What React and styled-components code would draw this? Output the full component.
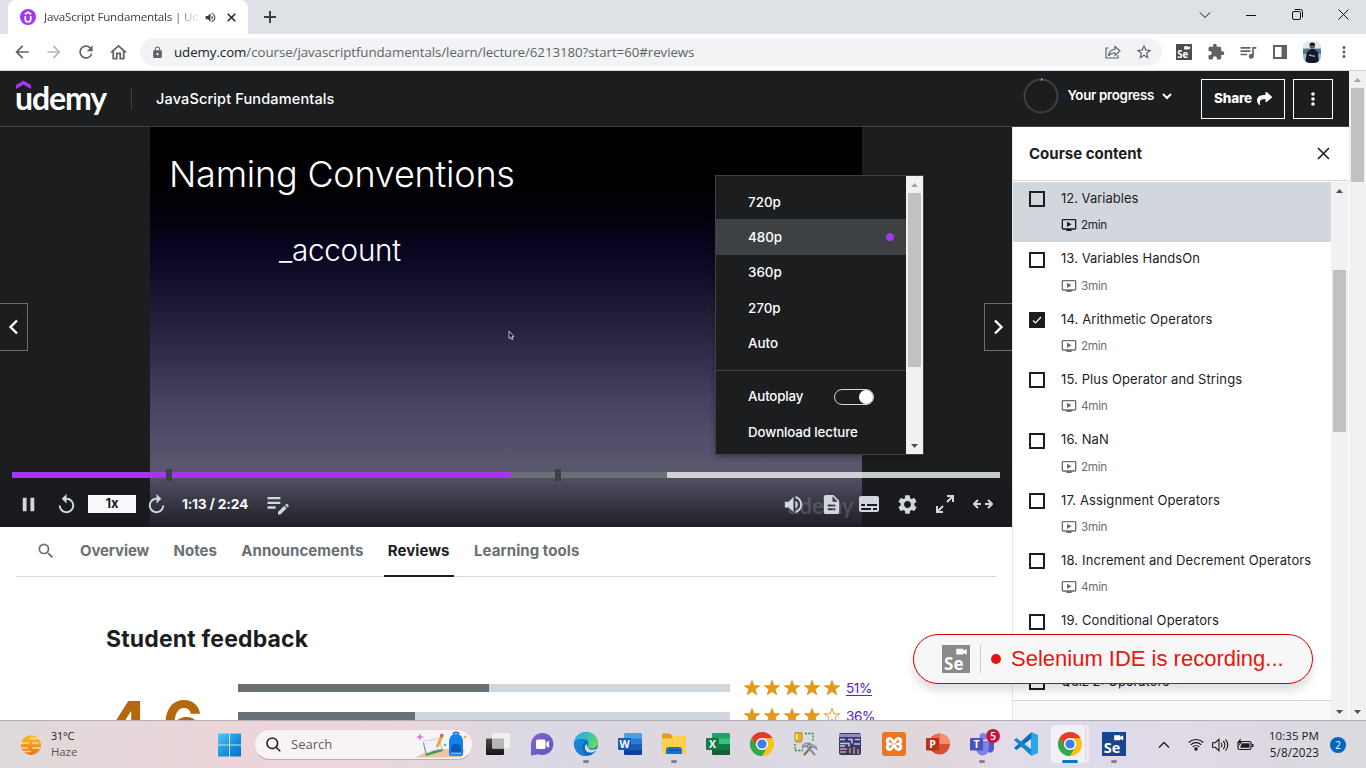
import React from "react";
import styled, { createGlobalStyle } from "styled-components";
import {
  MdArrowBack, MdArrowForward, MdRefresh, MdOutlineHome, MdLock, MdStarBorder, MdExtension, MdQueueMusic,
  MdMoreVert, MdVolumeUp, MdPause, MdReplay, MdEditNote, MdDescription, MdSubtitles, MdSettings, MdSearch,
  MdOutlineOndemandVideo,
} from "react-icons/md";
import { FaShare } from "react-icons/fa";

const Global = createGlobalStyle`
  * { box-sizing: border-box; }
  body { margin: 0; background: #fff; overflow: hidden; }
  svg { display: block; flex: none; }
`;
const UDEMY = `Inter, "Liberation Sans", sans-serif`;
const SEGOE = `"Open Sans", "Noto Sans", sans-serif`;

const Screen = styled.div`
  width: 1366px; height: 768px; display: flex; flex-direction: column; overflow: hidden;
  font-family: ${UDEMY}; color: #1c1d1f; position: relative;
`;
const Text = styled.span`
  white-space: nowrap; letter-spacing: ${(p) => p.$ls || 0}px; font-size: ${(p) => p.$size || 14}px;
  font-weight: ${(p) => p.$w || 400}; color: ${(p) => p.$c || "inherit"}; line-height: 1.2;
`;

/* browser chrome */
const TabStrip = styled.div`height: 34px; background: #dee1e6; display: flex; padding-left: 8px; flex: none;`;
const Tab = styled.div`
  width: 240px; height: 34px; background: #fff; border-radius: 8px 8px 0 0; display: flex; align-items: center;
  padding: 0 10px 0 12px; font-family: ${SEGOE};
`;
const TabTitle = styled.div`
  width: 154px; margin-left: 8px; overflow: hidden; white-space: nowrap; font-size: 11.6px; color: #3c4043;
  letter-spacing: -0.2px; line-height: 16px;
  mask-image: linear-gradient(90deg, #000 130px, transparent 156px);
`;
const TabIcon = styled.div`margin-left: ${(p) => p.$ml || 0}px;`;
const NewTab = styled.div`display: flex; align-items: center; padding-left: 16px; flex: 1;`;
const WindowButtons = styled.div`display: flex; width: 184px; height: 29px; align-items: center;`;
const WindowButton = styled.div`width: 46px; display: flex; justify-content: center;`;
const Toolbar = styled.div`
  height: 37px; background: #fff; border-bottom: 1px solid #d5d7da; display: flex; align-items: center; flex: none;
  padding-left: 12px; color: #5f6368;
`;
const ToolButton = styled.div`width: ${(p) => p.$w || 32}px; display: flex; justify-content: center; opacity: ${(p) => p.$o || 1}; flex: none;`;
const BookmarkStar = styled.div`margin: 0 -1px 0 14px;`;
const Omnibox = styled.div`
  width: 1022px; height: 28px; border-radius: 14px; background: #f1f3f4; display: flex; align-items: center;
  padding: 0 10px 0 11px; font-family: ${SEGOE};
`;
const Url = styled.div`flex: 1; margin-left: 10px; font-size: 13.3px; color: #5f6368; letter-spacing: -0.06px; b { font-weight: 400; color: #202124; }`;
const Avatar = styled.div`width: 18px; height: 22px; border-radius: 7px; overflow: hidden;`;

/* page */
const Page = styled.div`height: 649px; flex: none; display: flex; overflow: hidden; background: #fff;`;
const Site = styled.div`width: 1349px; display: flex; flex-direction: column;`;
const Header = styled.header`
  height: 56px; background: #1c1d1f; border-bottom: 1px solid #3e4143; color: #fff; display: flex; align-items: center;
  padding: 0 16px; flex: none;
`;
const Logo = styled.div`width: 92px; height: 40px; position: relative;`;
const LogoHat = styled.svg`position: absolute; left: 0; top: 1px;`;
const LogoWord = styled.div`font: 700 32px/37px Lato, sans-serif; letter-spacing: -1.1px; color: #fff; margin-left: -1px;`;
const Rule = styled.div`width: 1px; height: 22px; background: #3e4143; margin: 0 24px 0 23px;`;
const Grow = styled.div`flex: 1;`;
const Progress = styled.div`display: flex; align-items: center; height: 36px; margin-top: -6px; gap: 8px;`;
const HeaderButton = styled.div`
  height: 40px; width: ${(p) => p.$w}px; border: 1px solid #fff; display: flex; align-items: center; justify-content: center;
  gap: 5px; margin-left: ${(p) => p.$ml}px;
`;
const Columns = styled.div`display: flex; height: 593px;`;
const Main = styled.main`width: 1012px; flex: none;`;

/* player */
const Player = styled.section`height: 400px; background: #1c1d1f; display: flex; justify-content: center; position: relative; color: #fff; overflow: hidden;`;
const Slide = styled.div`
  width: 712px; height: 400px;
  background: linear-gradient(#000 0, #010104 60px, #03020d 95px, #080520 120px, #0f0d28 148px, #1d1b35 180px, #312d4a 228px, #464260 275px, #55516c 320px, #5c586f 345px);
`;
const SlideTitle = styled.div`margin: 25px 0 0 19px; font-size: 36px; line-height: 44px; font-weight: 300; letter-spacing: -0.22px;`;
const SlideLine = styled.div`margin: 35px 0 0 129px; font-size: 29.6px; line-height: 38px; font-weight: 300; letter-spacing: -0.25px;`;
const Cursor = styled.svg`position: absolute; left: 508px; top: 203px;`;
const NavButton = styled.div`
  position: absolute; top: 176px; ${(p) => p.$side}: 0; width: 28px; height: 48px; background: #1c1d1f;
  border: 1px solid #6a6f73; border-${(p) => p.$side}: 0; display: flex; align-items: center; justify-content: center;
  padding-right: ${(p) => (p.$side === "right" ? 2 : 0)}px;
`;
const Watermark = styled.span`position: absolute; left: 787px; top: 366px; font: 700 22px/26px Lato, sans-serif; color: rgba(150,150,165,.32); letter-spacing: 0;`;
const Shade = styled.div`position: absolute; left: 0; right: 0; bottom: 0; height: 58px; background: linear-gradient(rgba(20,22,28,0), rgba(20,22,28,.35) 40%, rgba(24,26,31,.92));`;
const Seek = styled.div`position: absolute; left: 12px; width: 988px; top: 345px; height: 6px; display: flex;`;
const SeekPart = styled.div`width: ${(p) => p.$w}px; background: ${(p) => p.$c};`;
const Bookmark = styled.div`position: absolute; left: ${(p) => p.$x}px; top: -3px; width: 6px; height: 12px; background: #3e4143;`;
const Controls = styled.div`
  position: absolute; left: 0; right: 0; bottom: 0; height: 46px; display: flex; align-items: center; color: #d1d7dc;
  padding: 0 10px 0 9px;
`;
const Control = styled.div`width: ${(p) => p.$w || 38}px; height: 38px; display: flex; align-items: center; justify-content: center;`;
const Rate = styled.div`width: 48px; height: 18px; background: #f7f9fa; color: #1c1d1f; display: flex; align-items: center; justify-content: center; margin: 0 1px 0 3px;`;
const Mirror = styled.div`transform: scaleX(-1);`;

const Menu = styled.div`
  position: absolute; left: 715px; top: 48px; width: 209px; height: 280px; border: 1px solid #3e4143; background: #1c1d1f;
  display: flex; box-shadow: 0 2px 6px rgba(0,0,0,.3);
`;
const MenuList = styled.div`flex: 1; padding-top: 8px;`;
const MenuItem = styled.div`
  height: 35.4px; padding: 0 12px 0 32px; display: flex; align-items: center; justify-content: space-between;
  background: ${(p) => (p.$on ? "#3e4143" : "transparent")};
`;
const Dot = styled.i`width: 8px; height: 8px; border-radius: 50%; background: #a435f0;`;
const MenuRule = styled.div`height: 1px; background: #3e4143; margin: 9px 0 8.6px;`;
const Toggle = styled.div`width: 40px; height: 16px; border: 1px solid #d1d7dc; border-radius: 8px; display: flex; justify-content: flex-end; margin-right: 20px; i { width: 14px; height: 14px; border-radius: 50%; background: #fff; }`;

const Bar = styled.div`width: 17px; background: #f1f1f1; display: flex; flex-direction: column; align-items: center; flex: none;`;
const BarArrow = styled.div`height: 17px; flex: none; display: flex; align-items: center;`;
const Thumb = styled.div`width: 13px; background: #c1c1c1; margin-top: ${(p) => p.$top || 0}px; height: ${(p) => p.$h}px;`;

/* below player */
const TabBar = styled.nav`height: 50px; margin: 0 16px; border-bottom: 1px solid #d1d7dc; display: flex; color: #6a6f73; padding-left: 22px;`;
const TabItem = styled.div`
  height: 50px; display: flex; align-items: center; padding: 0 4px 2px; margin-left: ${(p) => p.$ml || 16.4}px;
  ${(p) => p.$on && "border-bottom: 2px solid #1c1d1f; color: #1c1d1f; padding-bottom: 0;"}
`;
const TabSearch = styled.div`width: 15px; height: 48px; display: flex; align-items: center; justify-content: center;`;
const Feedback = styled.section`padding: 46px 0 0 106px; height: 143px; overflow: hidden;`;
const FeedbackTitle = styled.h2`margin: 0; font-size: 23px; line-height: 32px; font-weight: 700; letter-spacing: 0.16px;`;
const Ratings = styled.div`display: flex; margin-top: 19px;`;
const Score = styled.div`width: 132px; margin-top: 18px; font-size: 63px; line-height: 64px; font-weight: 700; color: #b4690e; letter-spacing: -1.6px;`;
const MeterRow = styled.div`display: flex; height: 28px; align-items: center;`;
const Meter = styled.div`width: 492px; height: 8px; background: #d1d7dc; margin-right: 14px;`;
const MeterFill = styled.div`height: 8px; background: #6a6f73;`;
const Stars = styled.div`display: flex; gap: 4px; margin-right: 6px;`;
const Percent = styled(Text)`color: #5624d0; text-decoration: underline; text-underline-offset: 2px; text-decoration-thickness: 1px; font-size: 13.6px; letter-spacing: -0.4px;`;

/* sidebar */
const Sidebar = styled.aside`width: 337px; border-left: 1px solid #e4e8eb; display: flex; flex-direction: column; background: #fff;`;
const SideHead = styled.div`height: 54px; border-bottom: 1px solid #d1d7dc; display: flex; align-items: center; justify-content: space-between; padding: 0 19px 0 16px; flex: none;`;
const SideBody = styled.div`display: flex; height: 538px; margin-top: 1px;`;
const Lectures = styled.div`width: 318px; background: #f7f9fa; overflow: hidden;`;
const LectureGroup = styled.div`background: #fff; height: 519px; overflow: hidden; border-bottom: 1px solid #d1d7dc;`;
const Lecture = styled.div`height: 60.33px; background: ${(p) => (p.$on ? "#d1d7dc" : "#fff")}; display: flex; padding: 9.33px 16px 0;`;
const Check = styled.div`
  width: 16px; height: 16px; border: 2px solid #1c1d1f; background: ${(p) => (p.$on ? "#1c1d1f" : "transparent")};
  margin-right: 16px; flex: none; display: flex; align-items: center; justify-content: center;
`;
const LectureTitle = styled.div`height: 16px; margin-top: -0.4px; display: flex; align-items: center;`;
const LectureMeta = styled.div`height: 16px; margin-top: 10.4px; display: flex; align-items: center; gap: 4px; color: ${(p) => (p.$on ? "#1c1d1f" : "#6a6f73")};`;

/* recorder badge */
const Recorder = styled.div`
  position: absolute; left: 913px; top: 634px; width: 400px; height: 50px; border: 1px solid #d30000; border-radius: 25px;
  background: #f7f7f7; box-shadow: 0 7px 10px rgba(0,0,0,.13); display: flex; align-items: center; padding-left: 28px;
  font-family: "Liberation Sans", Arial, sans-serif;
`;
const RecorderRule = styled.div`width: 1px; height: 28px; background: #ccc; margin: 0 10px;`;
const RecorderDot = styled.i`width: 10px; height: 10px; border-radius: 50%; background: #e8140f; margin-right: 10px;`;

/* taskbar */
const Taskbar = styled.footer`
  height: 48px; flex: none; border-top: 1px solid #b3afb2; display: flex; align-items: center; font-family: ${SEGOE};
  background: linear-gradient(90deg, #dddadb 0, #e4d8da 90px, #ead5d9 200px, #edd5dc 340px, #e6d7dc 440px, #dad9e4 530px, #ddd7df 700px, #dcdae3 850px, #e1d5da 930px, #e2dbe8 1010px, #dddaea 1100px, #e2dae6 1180px, #dcd8e2 1280px, #dadbdf 1366px);
`;
const Weather = styled.div`width: 217px; display: flex; align-items: center; padding-left: 19px; gap: 8px;`;
const Stack = styled.div`display: flex; flex-direction: column; align-items: ${(p) => p.$align || "flex-start"}; margin-top: -1px; ${Text} { line-height: 16px; }`;
const SearchPill = styled.div`
  width: 219px; height: 31px; margin: 0 3px 0 13px; border-radius: 16px; background: #f8f3f5; border: 1px solid #e0d3d7; border-bottom-color: #b9aeb2;
  display: flex; align-items: center; padding: 0 3px 0 11px; gap: 10px;
`;
const AppSlot = styled.div`
  width: 44px; height: 47px; display: flex; flex-direction: column; align-items: center; padding-top: 11px; position: relative;
`;
const ActivePlate = styled.div`position: absolute; left: 3px; top: 4px; width: 34px; height: 38px; border-radius: 4px; background: #f3eff6; box-shadow: 1px 0 0 #dcd7e4, 4px 0 0 #eee9f3;`;
const IconBox = styled.div`position: relative; width: 24px; height: 24px;`;
const Running = styled.i`width: ${(p) => (p.$active ? 16 : 6)}px; height: 3px; border-radius: 2px; background: ${(p) => (p.$active ? "#0078d4" : "#838087")}; margin-top: 4px; position: relative;`;
const Tray = styled.div`flex: 1; display: flex; align-items: center; justify-content: flex-end; padding-right: 20px; color: #1b1b1b;`;
const TrayIcon = styled.div`margin-right: ${(p) => p.$mr}px;`;
const Count = styled.div`width: 16px; height: 16px; border-radius: 50%; background: #0067c0; color: #fff; font-size: 10px; line-height: 16px; text-align: center; margin-left: 11px;`;
const TeamsCount = styled.div`position: absolute; left: 16px; top: -3px; width: 14px; height: 14px; border-radius: 50%; background: #c4143c; color: #fff; font: 600 10px/14px ${SEGOE}; text-align: center;`;

const Line = ({ d, s = 16, vb = "0 0 16 16", w = 1.5, c = "currentColor" }) => (
  <svg width={s} height={s} viewBox={vb} fill="none" stroke={c} strokeWidth={w}><path d={d} /></svg>
);
const Tri = ({ up, c = "#505050" }) => (
  <svg width="7" height="4" viewBox="0 0 7 4"><path d={up ? "M0 4 3.5 0 7 4z" : "M0 0 3.5 4 7 0z"} fill={c} /></svg>
);
const SeTile = ({ s, bg }) => (
  <svg width={s} height={s} viewBox="0 0 24 24">
    <rect width="24" height="24" fill={bg} />
    <path d="M12.2 3.2h6v1.6l3-1.400v4.800l-3-1.200v1.200h-6z" fill="#fff" />
    <text x="1.800" y="21" fontFamily="Open Sans, sans-serif" fontWeight="700" fontSize="14.500" fill="#fff">Se</text>
  </svg>
);
const UdemyBadge = () => (
  <svg width="16" height="16" viewBox="0 0 16 16"><circle cx="8" cy="8" r="8" fill="#a435f0" /><path d="M4.8 5.3 8 3.300l3.200 2M5.300 7v3.200a2.700 2.700 0 0 0 5.400 0V7" fill="none" stroke="#fff" strokeWidth="1.700" /></svg>
);
const Person = () => (
  <svg width="18" height="22" viewBox="0 0 18 22">
    <rect width="18" height="22" fill="#9db9c8" /><rect width="18" height="7" fill="#dfeaf0" /><path d="M0 8h18v5H0z" fill="#52788a" />
    <path d="M2 22 4 11l4-3h3l4 3 1 11z" fill="#111a2e" /><circle cx="9.300" cy="4.800" r="2.800" fill="#6b4f48" /><path d="M6.500 4.300a2.800 2.800 0 0 1 5.600 0z" fill="#14141c" /><path d="m6 14 6 1.400" stroke="#c59a86" strokeWidth="1.400" />
  </svg>
);
const Chrome = () => (
  <svg width="24" height="24" viewBox="0 0 24 24">
    <circle cx="12" cy="12" r="12" fill="#fbc116" />
    <path d="M1.600 6A12 12 0 0 1 22.400 6H12a6 6 0 0 0-5.200 9z" fill="#e33b2e" />
    <path d="M1.600 6A12 12 0 0 0 12 24l5.200-9A6 6 0 0 1 6.800 15z" fill="#2da94f" />
    <circle cx="12" cy="12" r="6" fill="#fff" /><circle cx="12" cy="12" r="4.600" fill="#3b7ded" />
  </svg>
);
const IconLetter = ({ children, y = 15.6 }) => (
  <text x="6.500" y={y} textAnchor="middle" fontFamily="Open Sans, sans-serif" fontWeight="700" fontSize="10.500" fill="#fff">{children}</text>
);
const Office = ({ letter, colors, tile }) => (
  <svg width="24" height="24" viewBox="0 0 24 24">
    <rect x="6" y="1" width="18" height="22" rx="1.400" fill={colors[0]} /><path d="M6 6.500h18V12H6z" fill={colors[1]} />
    <path d="M6 12h18v5.500H6z" fill={colors[2]} /><path d="M6 17.500h18v4a1.500 1.500 0 0 1-1.500 1.500h-15A1.500 1.500 0 0 1 6 21.500z" fill={colors[3]} />
    <rect y="6" width="13" height="12" rx="1" fill={tile} />
    <IconLetter>{letter}</IconLetter>
  </svg>
);
const icons = {
  taskview: <svg width="24" height="24" viewBox="0 0 24 24"><defs><linearGradient id="tv" x2="0" y2="1"><stop stopColor="#4a4a4a" /><stop offset="1" stopColor="#161616" /></linearGradient></defs><rect y="6.500" width="18" height="16.500" rx="1" fill="url(#tv)" /><rect x="6" y="1" width="18" height="15.500" rx="1.500" fill="#f1f0f1" /><path d="M6 6.500h12v10H7.500A1.500 1.500 0 0 1 6 15z" fill="#b5b5b5" /></svg>,
  chat: <svg width="24" height="24" viewBox="0 0 24 24"><defs><linearGradient id="ch" x2="1" y2="1"><stop stopColor="#8a63c5" /><stop offset="1" stopColor="#5458c4" /></linearGradient></defs><path d="M12.500 1a11 11 0 1 1-4 21.300L1 23.500V12A11.300 11.300 0 0 1 12.500 1z" fill="url(#ch)" /><rect x="6" y="7.500" width="9.500" height="9.500" rx="1.500" fill="#fff" /><path d="m16.300 10.500 2.800-2v7.500l-2.800-2z" fill="#fff" /></svg>,
  edge: <svg width="24" height="24" viewBox="0 0 24 24"><defs><linearGradient id="ed" x2="1" y2=".3"><stop stopColor="#2aa8e6" /><stop offset=".6" stopColor="#35c1c0" /><stop offset="1" stopColor="#62da5c" /></linearGradient></defs><circle cx="12" cy="12" r="12" fill="#0f6cbd" /><path d="M0 11C1 4 6 0 12 0c7 0 12 5 12 10.500 0 4-3 6-6.500 6-2.500 0-4-1-4-2 0-.8 1-1.300 1-3.200C14.500 8.500 11.500 7 8.500 7 4 7 1 9.500 0 11z" fill="url(#ed)" /><path d="M8.500 16C8 12.500 10 9.500 12.500 8.700 10 6.500 4 7 1 10.500-1 17 4 24 12 24c-2-1-3.200-4.500-3.500-8z" fill="#1683d8" /><path d="M13.300 11.500c-1.500 2.500 1 6 4.200 6.200 2.500 0 4.500-1 5.800-1.500C21.500 20 18 21 15 20.500c-4-.8-6-6-1.700-9z" fill="#dcd9e2" /></svg>,
  word: <Office letter="W" colors={["#41a5ee", "#2b7cd3", "#185abd", "#103f91"]} tile="#185abd" />,
  folder: <svg width="24" height="24" viewBox="0 0 24 24"><path d="M0 3a1.500 1.500 0 0 1 1.500-1.500H8L10.500 4H24v5H0z" fill="#e09f14" /><path d="M0 6.500h9L11 4h11.500A1.500 1.500 0 0 1 24 5.500V20a2 2 0 0 1-2 2H2a2 2 0 0 1-2-2z" fill="#ffd04c" /><path d="M4 22v-4a3 3 0 0 1 3-3h10a3 3 0 0 1 3 3v4z" fill="#1277cc" /><path d="M7 18.300h10" stroke="#0b4e91" strokeWidth="1.300" /></svg>,
  excel: <Office letter="X" colors={["#21a366", "#33c481", "#107c41", "#185c37"]} tile="#107c41" />,
  chrome: <Chrome />,
  tools: <svg width="24" height="24" viewBox="0 0 24 24"><rect x="1" y="0" width="7" height="10" rx="2" fill="#e4b51d" stroke="#8a7015" strokeWidth=".7" /><path d="M2.500 2v6" stroke="#fff6a8" strokeWidth="1.500" /><path d="M11 1.500h8v8M1 12v6.500h8" fill="none" stroke="#2c8a2c" strokeWidth="1.300" strokeDasharray="2 1.300" /><path d="m10 23 8-9" stroke="#8c6a3f" strokeWidth="2" /><path d="m12 13 9 10" stroke="#7f8fa0" strokeWidth="2" /><path d="M8 14c2-3 6-4 8-2l-3 2-3 .5-1 2zM15 11l7 3.500 1 3-3-2-4-1z" fill="#aab8c6" stroke="#56677a" strokeWidth=".7" /></svg>,
  circuit: <svg width="24" height="24" viewBox="0 0 24 24"><rect x="1" y="1" width="22" height="22" rx="2" fill="#3b3970" /><path d="M1 3.500h22" stroke="#8f8dbd" strokeWidth="3" /><path d="M2 7.500h5M10 7.500h4v4M17 7.500h5M2 11.500h9v3M16 12h6M2 14h5" fill="none" stroke="#c4c3e4" strokeWidth="1.500" /><path d="M2 17h7M2 20h6M12 16v5M16 15v7M20 17v5" stroke="#dba55b" strokeWidth="1.300" /></svg>,
  xampp: <svg width="24" height="24" viewBox="0 0 24 24"><rect width="24" height="24" rx="3" fill="#ee7623" /><path d="M8 6.500c-3.500 0-3.500 4.500-.5 5.500-3 1-3 5.500.5 5.500 2.400 0 2-3.500 4-3.500s1.600 3.500 4 3.500c3.500 0 3.500-4.500.5-5.500 3-1 3-5.500-.5-5.500-2.400 0-2 3.500-4 3.500S10.400 6.500 8 6.500z" fill="none" stroke="#fff" strokeWidth="3" /></svg>,
  ppt: <svg width="24" height="24" viewBox="0 0 24 24"><circle cx="13.500" cy="12" r="10.500" fill="#d35230" /><path d="M13.500 1.500A10.500 10.500 0 0 1 24 12H13.500z" fill="#ff8f6b" /><path d="M13.500 1.500A10.500 10.500 0 0 0 3 12h10.500z" fill="#ed6c47" /><rect y="6" width="13" height="12.500" rx="1" fill="#b83218" /><IconLetter>P</IconLetter></svg>,
  teams: <svg width="24" height="24" viewBox="0 0 24 24"><circle cx="13" cy="4.500" r="3.500" fill="#7b83eb" /><path d="M16 9h8v8a4 4 0 0 1-6 3z" fill="#5059c9" /><path d="M6 9h13v8a6.500 6.500 0 0 1-13 0z" fill="#7b83eb" /><rect y="6" width="13" height="12.500" rx="1" fill="#4b53bc" /><IconLetter>T</IconLetter></svg>,
  code: <svg width="24" height="24" viewBox="0 0 24 24"><path d="M17.500 0 24 3v18l-6.500 3-.5-6V6z" fill="#29a8ee" /><path d="M17.500 0v6.500L2.500 18 0 16z" fill="#0a6fb8" /><path d="M17.500 24v-6.500L2.500 6 0 8z" fill="#1387cf" /></svg>,
  selenium: <SeTile s={24} bg="#17468f" />,
};
const apps = [
  ["taskview"], ["chat"], ["edge", 1], ["word"], ["folder", 1], ["excel"], ["chrome"], ["tools"], ["circuit"], ["xampp"],
  ["ppt"], ["teams", 1], ["code"], ["chrome", 2], ["selenium", 1],
];
const lectures = [
  ["12. Variables", "2min", 0], ["13. Variables HandsOn", "3min", 0.05], ["14. Arithmetic Operators", "2min", 0.12],
  ["15. Plus Operator and Strings", "4min", 0.11], ["16. NaN", "2min", 0.1], ["17. Assignment Operators", "3min", 0.13],
  ["18. Increment and Decrement Operators", "4min", 0.145], ["19. Conditional Operators", "3min", 0.13], ["Quiz 2: Operators", "", 0],
];

export default function App() {
  return (
    <Screen>
      <Global />
      <TabStrip>
        <Tab>
          <UdemyBadge />
          <TabTitle>JavaScript Fundamentals | Udemy</TabTitle>
          <TabIcon $ml={6}><MdVolumeUp size={13} color="#3c4043" /></TabIcon>
          <TabIcon $ml={10}><Line s={9} vb="0 0 9 9" d="m.7.7 7.600 7.600M8.300.7.7 8.300" c="#202124" /></TabIcon>
        </Tab>
        <NewTab><Line s={12} vb="0 0 12 12" d="M6 0v12M0 6h12" c="#3c4043" w={2} /></NewTab>
        <WindowButtons>
          <WindowButton><Line s={12} vb="0 0 12 12" d="m1 3.500 5 5 5-5" c="#111" w={1} /></WindowButton>
          <WindowButton><Line s={10} vb="0 0 10 10" d="M0 5.500h10" c="#111" w={1} /></WindowButton>
          <WindowButton><svg width="11" height="11" viewBox="0 0 11 11" fill="none" stroke="#111"><rect x=".5" y="2.500" width="8" height="8" rx="1.500" /><path d="M2.800.5h5.700a2 2 0 0 1 2 2v5.700" /></svg></WindowButton>
          <WindowButton><Line s={11} vb="0 0 11 11" d="m.5.5 10 10m0-10-10 10" c="#111" w={1} /></WindowButton>
        </WindowButtons>
      </TabStrip>
      <Toolbar>
        <ToolButton $w={20}><MdArrowBack size={20} /></ToolButton>
        <ToolButton $w={44} $o={0.45}><MdArrowForward size={20} /></ToolButton>
        <ToolButton $w={20}><MdRefresh size={20} /></ToolButton>
        <ToolButton $w={44}><MdOutlineHome size={21} /></ToolButton>
        <Omnibox>
          <MdLock size={13} />
          <Url><b>udemy.com</b>/course/javascriptfundamentals/learn/lecture/6213180?start=60#reviews</Url>
          <Line d="M3.500 4H1v10h12v-3M10 2.500 15 7l-5 4.500V9C7 8.800 5 9.700 3.500 12 4 8 6 5.600 10 5.200z" w={1.2} />
          <BookmarkStar><MdStarBorder size={18} /></BookmarkStar>
        </Omnibox>
        <ToolButton $w={44}><SeTile s={16} bg="#4d4d4d" /></ToolButton>
        <ToolButton $w={20}><MdExtension size={18} /></ToolButton>
        <ToolButton $w={44}><MdQueueMusic size={20} /></ToolButton>
        <ToolButton $w={20}><svg width="14" height="14" viewBox="0 0 14 14"><path d="M1 1h12v12H1z" fill="none" stroke="#5f6368" strokeWidth="2" /><path d="M8.500 1H13v12H8.500z" fill="#5f6368" /></svg></ToolButton>
        <ToolButton $w={44}><Avatar><Person /></Avatar></ToolButton>
        <ToolButton $w={20}><MdMoreVert size={18} /></ToolButton>
      </Toolbar>

      <Page>
        <Site>
          <Header>
            <Logo>
              <LogoHat width="15" height="9" viewBox="0 0 15 9"><path d="M0 5 7.500.5 15 5v4L7.500 4.800 0 9z" fill="#a435f0" /></LogoHat>
              <LogoWord>udemy</LogoWord>
            </Logo>
            <Rule />
            <Text $size={14.5} $w={500} $ls={0.14}>JavaScript Fundamentals</Text>
            <Grow />
            <Progress>
              <svg width="36" height="36" viewBox="0 0 36 36"><circle cx="18" cy="18" r="16.500" fill="none" stroke="#3e4143" strokeWidth="2" /><path d="M18 1.500h1.500" stroke="#c0a8f0" strokeWidth="2" /></svg>
              <Text $w={600} $size={13.3} $ls={-0.28}>Your progress</Text>
              <Line s={10} vb="0 0 10 10" d="m1 3 4 4 4-4" w={2} />
            </Progress>
            <HeaderButton $w={84} $ml={29}><Text $w={800} $size={13.5} $ls={-0.2}>Share</Text><FaShare size={15} /></HeaderButton>
            <HeaderButton $w={40} $ml={8}><svg width="4" height="14" viewBox="0 0 4 14" fill="#fff"><circle cx="2" cy="2" r="1.800" /><circle cx="2" cy="7" r="1.800" /><circle cx="2" cy="12" r="1.800" /></svg></HeaderButton>
          </Header>
          <Columns>
            <Main>
              <Player>
                <Slide>
                  <SlideTitle>Naming Conventions</SlideTitle>
                  <SlideLine>_account</SlideLine>
                </Slide>
                <Cursor width="7" height="11" viewBox="0 0 7 11"><path d="M1 1v7.500l1.700-1.500 1.100 2.800 1.200-.5-1-2.700h2z" fill="#111" stroke="#ccc" strokeWidth=".9" /></Cursor>
                <Shade />
                <Watermark>udemy</Watermark>
                <NavButton $side="left"><Line s={16} d="m11 1.500-6.500 6.500 6.500 6.500" w={2.4} /></NavButton>
                <NavButton $side="right"><Line s={16} d="m5 1.500 6.500 6.500-6.500 6.500" w={2.4} /></NavButton>
                <Seek>
                  <SeekPart $w={499} $c="#a435f0" /><SeekPart $w={156} $c="#6a6f73" /><SeekPart $w={333} $c="rgba(226,229,228,.86)" />
                  <Bookmark $x={154} /><Bookmark $x={543} />
                </Seek>
                <Controls>
                  <Control><MdPause size={23} /></Control>
                  <Control><MdReplay size={23} /></Control>
                  <Rate><Text $size={13} $w={700}>1x</Text></Rate>
                  <Control><Mirror><MdReplay size={23} /></Mirror></Control>
                  <Control $w={80}><Text $w={700} $size={13.8} $ls={-0.2} $c="#f7f9fa">1:13 / 2:24</Text></Control>
                  <Control $w={46}><MdEditNote size={28} /></Control>
                  <Grow />
                  <Control><MdVolumeUp size={23} /></Control>
                  <Control><MdDescription size={23} /></Control>
                  <Control><MdSubtitles size={24} /></Control>
                  <Control><MdSettings size={23} /></Control>
                  <Control><Line s={18} vb="0 0 18 18" d="M11 1h6v6M17 1l-6 6M7 17H1v-6M1 17l6-6" w={2} /></Control>
                  <Control><Line s={20} vb="0 0 20 20" d="M5 6 1 10l4 4M15 6l4 4-4 4M1 10h7M12 10h7" w={2} /></Control>
                </Controls>
                <Menu>
                  <MenuList>
                    {["720p", "480p", "360p", "270p", "Auto"].map((q) => (
                      <MenuItem key={q} $on={q === "480p"}><Text $size={13.4} $w={500}>{q}</Text>{q === "480p" && <Dot />}</MenuItem>
                    ))}
                    <MenuRule />
                    <MenuItem><Text $size={13.3} $w={500} $ls={-0.15}>Autoplay</Text><Toggle><i /></Toggle></MenuItem>
                    <MenuItem><Text $size={13.3} $w={500} $ls={-0.1}>Download lecture</Text></MenuItem>
                  </MenuList>
                  <Bar><BarArrow><Tri up c="#a3a3a3" /></BarArrow><Thumb $h={174} /><Grow /><BarArrow><Tri /></BarArrow></Bar>
                </Menu>
              </Player>
              <TabBar>
                <TabSearch><MdSearch size={20} /></TabSearch>
                <TabItem $ml={23}><Text $size={15} $w={700} $ls={-0.12}>Overview</Text></TabItem>
                <TabItem><Text $size={15} $w={700}>Notes</Text></TabItem>
                <TabItem><Text $size={15} $w={700} $ls={0.07}>Announcements</Text></TabItem>
                <TabItem $on><Text $size={15} $w={700} $ls={0.07}>Reviews</Text></TabItem>
                <TabItem><Text $size={15} $w={700} $ls={0.07}>Learning tools</Text></TabItem>
              </TabBar>
              <Feedback>
                <FeedbackTitle>Student feedback</FeedbackTitle>
                <Ratings>
                  <Score>4.6</Score>
                  <div>
                    {[["51%", 5, 251], ["36%", 4, 177]].map(([p, n, w]) => (
                      <MeterRow key={p}>
                        <Meter><MeterFill style={{ width: w }} /></Meter>
                        <Stars>{[1, 2, 3, 4, 5].map((i) => (
                          <svg key={i} width="16" height="16" viewBox="0 0 16 16"><path d="m8 .5 1.900 5.300h5.600L11 9.200l1.700 5.500L8 11.400l-4.700 3.300L5 9.200.5 5.800h5.600z" fill={i <= n ? "#e59819" : "none"} stroke="#e59819" /></svg>
                        ))}</Stars>
                        <Percent>{p}</Percent>
                      </MeterRow>
                    ))}
                  </div>
                </Ratings>
              </Feedback>
            </Main>
            <Sidebar>
              <SideHead><Text $size={15} $w={700}>Course content</Text><Line s={13} vb="0 0 13 13" d="m1 1 11 11M12 1 1 12" w={1.6} /></SideHead>
              <SideBody>
                <Lectures>
                  <LectureGroup>
                    {lectures.map(([t, m, ls], i) => (
                      <Lecture key={t} $on={i === 0}>
                        <Check $on={i === 2}>{i === 2 && <Line s={10} vb="0 0 10 10" d="m1 5.500 2.500 2.500L9 2" c="#fff" w={1.2} />}</Check>
                        <div>
                          <LectureTitle><Text $size={13} $ls={ls}>{t}</Text></LectureTitle>
                          {m && <LectureMeta $on={i === 0}><MdOutlineOndemandVideo size={16} /><Text $size={11.7} $ls={-0.28}>{m}</Text></LectureMeta>}
                        </div>
                      </Lecture>
                    ))}
                  </LectureGroup>
                </Lectures>
                <Bar><BarArrow><Tri up /></BarArrow><Thumb $top={71} $h={162} /><Grow /><BarArrow><Tri /></BarArrow></Bar>
              </SideBody>
            </Sidebar>
          </Columns>
        </Site>
        <Bar><BarArrow><Tri up c="#a3a3a3" /></BarArrow><Thumb $h={94} /><Grow /><BarArrow><Tri /></BarArrow></Bar>
      </Page>

      <Taskbar>
        <Weather>
          <svg width="24" height="22" viewBox="0 0 24 22"><defs><linearGradient id="sun" x2="0" y2="1"><stop stopColor="#fcc419" /><stop offset="1" stopColor="#ef6c1a" /></linearGradient></defs><circle cx="12" cy="11" r="10" fill="url(#sun)" /><path d="M11 4.500h13M1 9h9M13 9h7M3 14h6M13 14h8M0 17.500h12" stroke="#f6dcae" strokeWidth="1.400" /></svg>
          <Stack><Text $size={10.8} $ls={-0.15}>31°C</Text><Text $size={11.3} $c="#555">Haze</Text></Stack>
        </Weather>
        <svg width="24" height="24" viewBox="0 0 24 24"><defs><linearGradient id="win" gradientUnits="userSpaceOnUse" x1="0" y1="0" x2="24" y2="24"><stop stopColor="#4fd0f5" /><stop offset=".6" stopColor="#118fdf" /><stop offset="1" stopColor="#0570cc" /></linearGradient></defs><path d="M1 .5h11v11H1zM13 .5h11v11H13zM1 12.500h11v11H1zM13 12.500h11v11H13z" fill="url(#win)" /></svg>
        <SearchPill>
          <svg width="15" height="15" viewBox="0 0 15 15" fill="none" stroke="#222" strokeWidth="1.600"><circle cx="6.300" cy="6.300" r="5.300" /><path d="m10.200 10.200 4 4" /></svg>
          <Text $size={13} $c="#5d5a5b">Search</Text>
          <Grow />
          <svg width="54" height="28" viewBox="0 0 54 28"><path d="M0 26.500 17 18h33l-4 8.500z" fill="#eac79c" /><path d="M8 12 24 8l4 12-17 5z" fill="#3f9d5a" /><path d="m8.500 10 7.500-1 8-2 3 11-8 1.500-7.500 3z" fill="#f3f2fa" stroke="#b9b5d2" strokeWidth=".6" /><path d="m22 16 5-11" stroke="#f2a33c" strokeWidth="3" /><path d="m26 6 1.500-3" stroke="#e0524d" strokeWidth="3" /><path d="m5 2 1 3 3 1-3 1-1 3-1-3-3-1 3-1z" fill="#d877e8" /><path d="M38 3a3.500 3.500 0 0 1 6 0" fill="none" stroke="#0f62b5" strokeWidth="1.500" /><path d="M34 11c0-11 14-11 14 0v12a2 2 0 0 1-2 2H36a2 2 0 0 1-2-2z" fill="#1482e8" /><path d="M36 16c0-4 10-4 10 0v5H36z" fill="#0b58b8" /><path d="M36 22.500h10" stroke="#c58df0" strokeWidth="1.500" /><circle cx="50" cy="6" r="1.500" fill="#f2b33c" /><circle cx="30" cy="14" r="1.300" fill="#5bd" /></svg>
        </SearchPill>
        {apps.map(([n, run], i) => (
          <AppSlot key={i}>
            {run === 2 && <ActivePlate />}
            <IconBox>{icons[n]}{n === "teams" && <TeamsCount>5</TeamsCount>}</IconBox>
            {run && <Running $active={run === 2} />}
          </AppSlot>
        ))}
        <Tray>
          <TrayIcon $mr={18}><Line s={12} vb="0 0 12 12" d="m1 8.500 5-5 5 5" w={1.3} /></TrayIcon>
          <TrayIcon $mr={8}><svg width="16" height="13" viewBox="0 0 16 13" fill="none" stroke="currentColor" strokeWidth="1.100"><path d="M.7 4.500a10.500 10.500 0 0 1 14.600 0M2.700 6.800a7.600 7.600 0 0 1 10.600 0M4.700 9a4.800 4.800 0 0 1 6.600 0" /><circle cx="8" cy="11" r="1.200" fill="currentColor" /></svg></TrayIcon>
          <TrayIcon $mr={8}><svg width="17" height="14" viewBox="0 0 17 14" fill="none" stroke="currentColor" strokeWidth="1.100"><path d="M.6 4.700h2.600L7 1.300v11.400L3.200 9.300H.6zM9 4.800a3 3 0 0 1 0 4.400M11.200 3a5.500 5.500 0 0 1 0 8M13.400 1.300a8 8 0 0 1 0 11.400" /></svg></TrayIcon>
          <TrayIcon $mr={15}><svg width="17" height="13" viewBox="0 0 17 13"><rect x="1" y="3.500" width="13" height="8" rx="1.500" fill="none" stroke="currentColor" strokeWidth="1.200" /><path d="M5 5.200h7.500v4.600H3zM15 6h1.500v3H15zM3.500 0 .5 5h2L2 8l3.500-4.500h-2z" fill="currentColor" /></svg></TrayIcon>
          <Stack $align="flex-end"><Text $size={11.5} $ls={0.06}>10:35 PM</Text><Text $size={11.7} $ls={0.06}>5/8/2023</Text></Stack>
          <Count>2</Count>
        </Tray>
      </Taskbar>

      <Recorder>
        <SeTile s={28} bg="#8a8a8a" />
        <RecorderRule /><RecorderDot />
        <Text $size={22} $c="#e8140f">Selenium IDE is recording...</Text>
      </Recorder>
    </Screen>
  );
}
